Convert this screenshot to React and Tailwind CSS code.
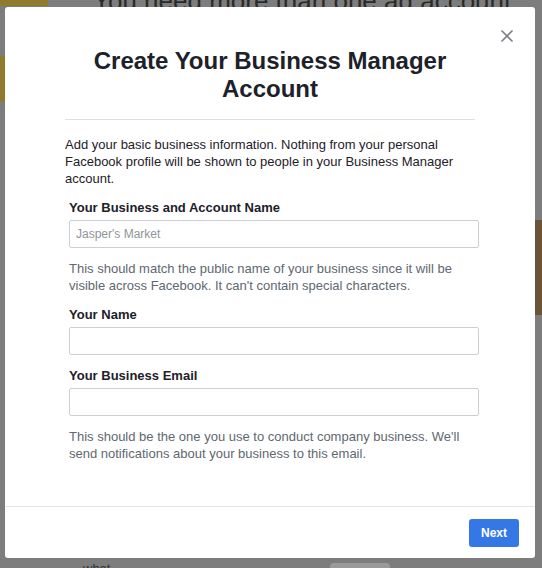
import React from 'react';

const Field = ({ label, placeholder }) => (
    <div className="mt-3">
        <label className="block text-[13px] leading-[17px] font-bold text-[#1d2129]">{label}</label>
        <input
            type="text"
            placeholder={placeholder}
            className="mt-1 block w-full h-[28px] border border-[#ccd0d5] rounded-[2px] px-[6px] text-[12px] text-[#1d2129] placeholder:text-[#90949c] outline-none bg-white"
        />
    </div>
);

const Hint = ({ children }) => (
    <p className="mt-3 text-[13px] leading-[17px] text-[#606770]">{children}</p>
);

const App = () => {
    return (
        <div
            className="relative min-h-[568px] bg-[#7d7d7d] overflow-hidden pt-[7px] px-[5px] pb-[10px]"
            style={{ fontFamily: '"Liberation Sans", Arial, sans-serif' }}
        >
            {/* page behind the dim overlay */}
            <div className="absolute left-0 top-0 w-[48px] h-[6px] bg-[#8f7a2e]" />
            <div className="absolute left-0 top-[56px] w-[5px] h-[46px] bg-[#8f7a2e]" />
            <div className="absolute right-0 top-[220px] w-[7px] h-[95px] bg-[#6b5438]" />
            <div className="absolute left-[93px] top-[-14px] text-[26px] leading-[30px] text-[#2a2a2a]">You need more than one ad account</div>
            <div className="absolute left-[83px] top-[559px] text-[13px] text-[#333]">what</div>
            <div className="absolute left-[330px] top-[563px] w-[60px] h-[5px] rounded-t bg-[#9a9a9a]" />

            <div className="relative w-[530px] h-[551px] bg-white rounded-[3px] flex flex-col">
                <button className="absolute right-[21px] top-[22px] w-[14px] h-[14px] flex items-center justify-center">
                    <svg width="14" height="14" viewBox="0 0 14 14">
                        <path d="M1.5 1.5 L12.5 12.5 M12.5 1.5 L1.5 12.5" stroke="#7d8087" strokeWidth="1.6" fill="none" />
                    </svg>
                </button>

                <div className="flex-1 pt-[40px]">
                    <div className="w-[410px] mx-auto">
                        <h1 className="text-center text-[24px] leading-[28px] font-bold text-[#1d2129]">
                            Create Your Business Manager<br />Account
                        </h1>
                        <div className="mt-4 h-px bg-[#dddfe2]" />
                        <p className="mt-4 text-[13px] leading-[17px] text-[#1d2129]">
                            Add your basic business information. Nothing from your personal Facebook profile will be shown to people in your Business Manager account.
                        </p>

                        <div className="ml-1 -mr-1">
                            <Field label="Your Business and Account Name" placeholder="Jasper's Market" />
                            <Hint>This should match the public name of your business since it will be visible across Facebook. It can't contain special characters.</Hint>
                            <Field label="Your Name" />
                            <Field label="Your Business Email" />
                            <Hint>This should be the one you use to conduct company business. We'll send notifications about your business to this email.</Hint>
                        </div>
                    </div>
                </div>

                <div className="border-t border-[#e5e5e5] pt-3 pb-[11px] pr-4 flex justify-end">
                    <button className="h-[28px] px-3 bg-[#3578e5] rounded-[3px] text-white text-[12px] font-bold">
                        Next
                    </button>
                </div>
            </div>
        </div>
    );
};

export default App;
